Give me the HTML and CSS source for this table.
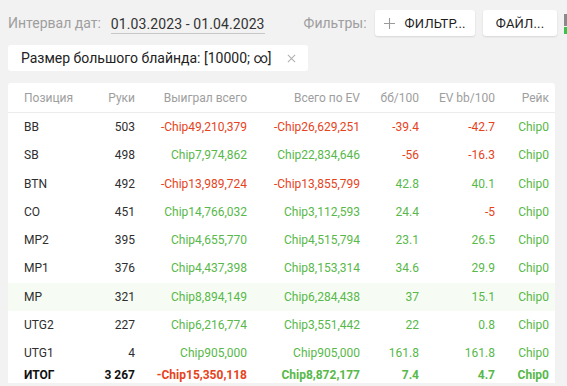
FILE: index.html
```html
<!DOCTYPE html>
<html>
<head>
  <meta charset="utf-8">
  <title>Статистика по позициям</title>
  <link rel="stylesheet" href="styles.css">
</head>
<body>
  <div class="toolbar">
    <span class="label">Интервал дат:</span>
    <span class="date-range">01.03.2023 - 01.04.2023</span>
    <svg class="caret" viewBox="0 0 10 5"><path d="M0 0h10L5 5z" fill="currentColor"/></svg>
    <span class="label filters-label">Фильтры:</span>
    <button class="btn btn-add">
      <svg class="plus" viewBox="0 0 12 12"><path d="M6 0v12M0 6h12" stroke="currentColor" stroke-width="1.2"/></svg>
      ФИЛЬТР...
    </button>
    <button class="btn">ФАЙЛ...</button>
    <div class="mini-icon">
      <span class="mini-gray"></span>
      <span class="mini-green"></span>
    </div>
  </div>

  <div class="chips">
    <div class="chip">
      Размер большого блайнда: [10000; ∞]
      <svg class="chip-close" viewBox="0 0 10 10"><path d="M1 1l8 8M9 1l-8 8" stroke="currentColor" stroke-width="1.2"/></svg>
    </div>
  </div>

  <div class="card">
    <div class="row head">
      <div class="left">Позиция</div>
      <div>Руки</div>
      <div>Выиграл всего</div>
      <div>Всего по EV</div>
      <div>бб/100</div>
      <div>EV bb/100</div>
      <div>Рейк</div>
    </div>
    <div class="row">
      <div class="left">BB</div><div>503</div>
      <div class="neg">-Chip49,210,379</div><div class="neg">-Chip26,629,251</div>
      <div class="neg">-39.4</div><div class="neg">-42.7</div><div class="pos">Chip0</div>
    </div>
    <div class="row">
      <div class="left">SB</div><div>498</div>
      <div class="pos">Chip7,974,862</div><div class="pos">Chip22,834,646</div>
      <div class="neg">-56</div><div class="neg">-16.3</div><div class="pos">Chip0</div>
    </div>
    <div class="row">
      <div class="left">BTN</div><div>492</div>
      <div class="neg">-Chip13,989,724</div><div class="neg">-Chip13,855,799</div>
      <div class="pos">42.8</div><div class="pos">40.1</div><div class="pos">Chip0</div>
    </div>
    <div class="row">
      <div class="left">CO</div><div>451</div>
      <div class="pos">Chip14,766,032</div><div class="pos">Chip3,112,593</div>
      <div class="pos">24.4</div><div class="neg">-5</div><div class="pos">Chip0</div>
    </div>
    <div class="row">
      <div class="left">MP2</div><div>395</div>
      <div class="pos">Chip4,655,770</div><div class="pos">Chip4,515,794</div>
      <div class="pos">23.1</div><div class="pos">26.5</div><div class="pos">Chip0</div>
    </div>
    <div class="row">
      <div class="left">MP1</div><div>376</div>
      <div class="pos">Chip4,437,398</div><div class="pos">Chip8,153,314</div>
      <div class="pos">34.6</div><div class="pos">29.9</div><div class="pos">Chip0</div>
    </div>
    <div class="row hover">
      <div class="left">MP</div><div>321</div>
      <div class="pos">Chip8,894,149</div><div class="pos">Chip6,284,438</div>
      <div class="pos">37</div><div class="pos">15.1</div><div class="pos">Chip0</div>
    </div>
    <div class="row">
      <div class="left">UTG2</div><div>227</div>
      <div class="pos">Chip6,216,774</div><div class="pos">Chip3,551,442</div>
      <div class="pos">22</div><div class="pos">0.8</div><div class="pos">Chip0</div>
    </div>
    <div class="row">
      <div class="left">UTG1</div><div>4</div>
      <div class="pos">Chip905,000</div><div class="pos">Chip905,000</div>
      <div class="pos">161.8</div><div class="pos">161.8</div><div class="pos">Chip0</div>
    </div>
    <div class="row total">
      <div class="left">ИТОГ</div><div>3 267</div>
      <div class="neg">-Chip15,350,118</div><div class="pos">Chip8,872,177</div>
      <div class="pos">7.4</div><div class="pos">4.7</div><div class="pos">Chip0</div>
    </div>
  </div>
</body>
</html>
```

FILE: styles.css
```css
:root {
  --bg: #f2f2f2;
  --text: #333333;
  --muted: #9e9e9e;
  --red: #e6431c;
  --green: #58b84a;
  --border: #ececec;
}

body {
  margin: 0;
  padding: 0 8px;
  background: var(--bg);
  color: var(--text);
  font-family: Roboto, "Liberation Sans", sans-serif;
  font-size: 14px;
  overflow: hidden;
}

.toolbar {
  display: flex;
  align-items: center;
  height: 26px;
  padding-top: 10px;
  white-space: nowrap;
}

.label {
  color: var(--muted);
}

.date-range {
  margin-left: 10px;
  color: var(--text);
  border-bottom: 1px solid #c8c8c8;
  line-height: 18px;
  padding-top: 2px;
  letter-spacing: 0.1px;
}

.caret {
  width: 9px;
  height: 5px;
  margin-left: 8px;
  color: #c4c4c4;
}

.filters-label {
  margin-left: 31px;
}

.btn {
  display: flex;
  align-items: center;
  height: 26px;
  margin-left: 8px;
  padding: 0 13px;
  background: #ffffff;
  border: none;
  border-radius: 3px;
  box-shadow: 0 1px 2px rgba(0,0,0,0.12);
  color: #1e1e1e;
  font-family: Roboto, "Liberation Sans", sans-serif;
  font-size: 13px;
  letter-spacing: 0.2px;
}

.btn-add {
  gap: 10px;
  padding: 0 9px;
}

.plus {
  width: 11px;
  height: 11px;
  color: #9a9a9a;
}

.mini-icon {
  display: flex;
  flex-direction: column;
  gap: 1px;
  margin-left: 7px;
  margin-top: 2px;
}

.mini-gray {
  width: 6px;
  height: 12px;
  background: #8a8a8a;
}

.mini-green {
  width: 6px;
  height: 7px;
  background: #3ac34a;
}

.chips {
  display: flex;
  margin-top: 9px;
}

.chip {
  display: flex;
  align-items: center;
  height: 26px;
  padding: 0 12px 0 13px;
  background: #ffffff;
  border-radius: 3px;
  color: #222222;
}

.chip-close {
  width: 9px;
  height: 9px;
  margin-left: 15px;
  color: #b0b0b0;
}

.card {
  margin-top: 12px;
  margin-right: 4px;
  padding: 0 6px 0 16px;
  background: #ffffff;
  border-radius: 3px 3px 0 0;
  font-size: 12px;
}

.row {
  display: grid;
  grid-template-columns: 71px 40px 112px 113px 59px 76px 54px;
  align-items: center;
  height: 28.25px;
  margin: 0 -6px 0 -16px;
  padding: 0 6px 0 16px;
  text-align: right;
  color: #2e2e2e;
}

.row .left {
  text-align: left;
}

.head {
  height: 29px;
  color: var(--muted);
  border-bottom: 1px solid var(--border);
}

.hover {
  background: #f6fcf4;
}

.neg {
  color: var(--red);
}

.pos {
  color: var(--green);
}

.total {
  height: 16px;
  font-weight: 700;
  color: #111111;
}
```
